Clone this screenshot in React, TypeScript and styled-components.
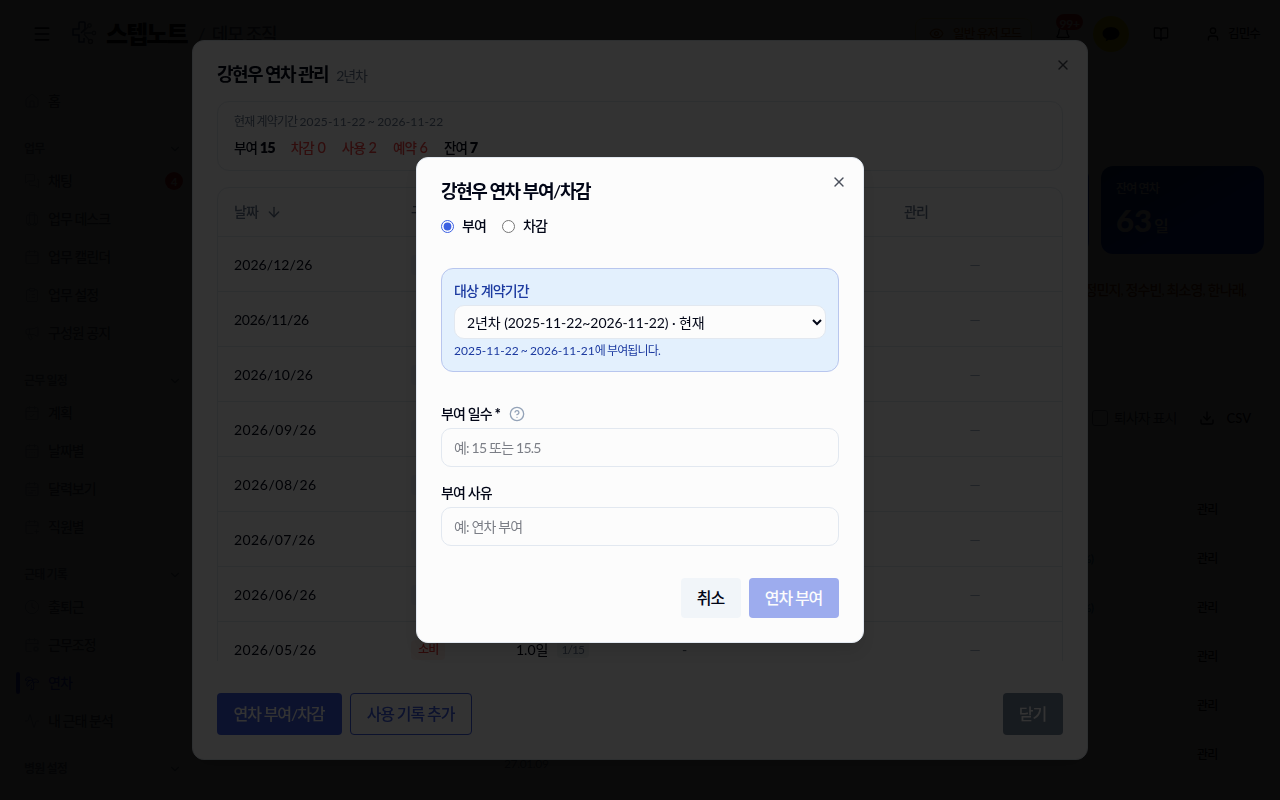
import React from "react";
import styled, { createGlobalStyle, css } from "styled-components";
import {
  Activity, ArrowDown, BookOpen, Calendar, CalendarCheck, CalendarCog, CalendarDays,
  CalendarPlus, CalendarRange, ChevronDown, CircleHelp, ClipboardList, Clock, Download, Eye, House,
  Luggage, Megaphone, Menu, MessagesSquare, TreePalm, User, X, Bell,
} from "lucide-react";
import type { LucideIcon } from "lucide-react";

const Global = createGlobalStyle`
  *, *::before, *::after { box-sizing: border-box; }
  html, body { margin: 0; padding: 0; background: #fcfcfc; }
  body, button, input, select {
    font-family: Lato, "Noto Sans CJK KR", sans-serif;
    letter-spacing: -0.062em;
  }
  body { width: 1280px; height: 800px; overflow: hidden; color: #020617; font-size: 14px; line-height: 20px; }
  button { border: 0; background: none; padding: 0; color: inherit; }
`;

const Num = styled.span<{ $ls?: number }>`
  letter-spacing: ${(p) => p.$ls ?? 0}em;
`;

/* Digits keep their natural tracking while Hangul is set tighter. */
const Txt = ({ children, ls }: { children: string; ls?: number }) => (
  <>
    {children.split(/([0-9./()~+-]+)/).map((s, i) => (i % 2 ? <Num key={i} $ls={ls}>{s}</Num> : s))}
  </>
);

/* ---------- page ---------- */
const Page = styled.div`
  height: 800px;
  display: grid;
  grid-template: 67px 1fr / 192px 1fr;
  overflow: hidden;
`;
const Header = styled.header`
  grid-column: 1 / -1;
  display: flex;
  align-items: center;
  padding: 0 20px 0 32px;
`;
const Brand = styled.div`
  display: flex;
  align-items: center;
  margin-left: 20px;
  font-size: 24px;
  font-weight: 900;
  letter-spacing: -0.08em;
  svg { margin-right: 9px; }
`;
const Slash = styled.span`
  margin: 0 7px 0 10px;
  font-size: 20px;
  color: #64748b;
`;
const Org = styled.span`
  font-size: 18px;
  font-weight: 500;
  letter-spacing: -0.07em;
  color: #475569;
`;
const Tools = styled.div`
  margin-left: auto;
  display: flex;
  align-items: center;
`;
const ModePill = styled.div`
  display: flex;
  align-items: center;
  gap: 9px;
  width: 117px;
  height: 32px;
  padding-left: 13px;
  border: 1px solid #fde68a;
  border-radius: 8px;
  background: #fffbeb;
  color: #b45309;
  font-size: 12.500px;
  font-weight: 500;
`;
const BellBox = styled.div`
  position: relative;
  display: flex;
  margin-left: 23px;
`;
const Count = styled.span<{ $float?: boolean }>`
  display: grid;
  place-items: center;
  height: ${(p) => (p.$float ? 16 : 18)}px;
  width: ${(p) => (p.$float ? 27 : 18)}px;
  border-radius: 9px;
  background: #dc2626;
  color: #fcfcfc;
  font-size: ${(p) => (p.$float ? 12 : 11)}px;
  font-weight: 700;
  letter-spacing: -0.02em;
  ${(p) => (p.$float ? css`position: absolute; left: 1px; top: -12px;` : css`margin-left: auto;`)}
`;
const Kakao = styled.div`
  display: grid;
  place-items: center;
  width: 36px;
  height: 36px;
  margin: 0 24px 0 22px;
  border-radius: 50%;
  background: #fee500;
`;
const UserBox = styled.div`
  display: flex;
  align-items: center;
  gap: 7px;
  margin-left: 36px;
  font-size: 12.500px;
  font-weight: 500;
`;

const Sidebar = styled.nav`
  padding: 15px 9px 0 16px;
  overflow: hidden;
`;
const NavHead = styled.div`
  display: flex;
  align-items: center;
  justify-content: space-between;
  height: 27px;
  margin-top: 15px;
  padding: 0 1px 0 8px;
  font-size: 12px;
  font-weight: 600;
  color: #64748b;
`;
const NavItem = styled.div<{ $active?: boolean }>`
  display: flex;
  align-items: center;
  gap: 8px;
  height: 38px;
  padding: 0 0 1px ${(p) => (p.$active ? 4 : 8)}px;
  font-weight: 500;
  letter-spacing: -0.068em;
  color: ${(p) => (p.$active ? "#2a3ff0" : "#475569")};
  > svg { color: ${(p) => (p.$active ? "#2a3ff0" : "#94a3b8")}; }
`;
const ActiveBar = styled.i`
  width: 4px;
  height: 22px;
  margin: 0 -4px 0 -4px;
  border-radius: 2px;
  background: #2a3ff0;
`;

const Main = styled.main`
  display: flex;
  flex-direction: column;
  padding: 99px 16px 0;
  overflow: hidden;
`;
const Stats = styled.div`
  display: flex;
  justify-content: flex-end;
  gap: 12px;
`;
const Stat = styled.div`
  flex: none;
  width: 163px;
  height: 88px;
  padding: 14px 15px;
  border-radius: 12px;
  background: linear-gradient(150deg, #0b3f9a 0%, #0a38b8 35%, #0a36f0 60%, #0a3cff 100%);
  color: #fcfcfc;
`;
const StatName = styled.div`
  font-size: 12px;
  line-height: 18px;
  font-weight: 500;
`;
const StatValue = styled.div`
  margin-top: 2px;
  font-size: 31px;
  line-height: 40px;
  font-weight: 900;
  small { margin-left: 2px; font-size: 16px; font-weight: 500; }
`;
const Notice = styled.div`
  height: 57px;
  margin: 16px 1px 0;
  padding: 10px 17px;
  border-radius: 8px;
  background: #fffbeb;
  color: #92400e;
  text-align: right;
  font-weight: 500;
`;
const Actions = styled.div`
  display: flex;
  align-items: center;
  justify-content: flex-end;
  height: 32px;
  margin: 75px 13px 0 0;
  color: #334155;
`;
const Check = styled.i`
  width: 16px;
  height: 16px;
  margin-right: 6px;
  border: 1px solid #64748b;
  border-radius: 3px;
`;
const Csv = styled.span`
  display: flex;
  align-items: center;
  gap: 12px;
  margin-left: 22px;
  font-size: 13px;
  font-weight: 500;
  letter-spacing: 0;
  color: #020617;
`;
const Roster = styled.div`
  margin: 15px 1px 0;
  padding-top: 35px;
  border: solid #eef2f6;
  border-width: 1px 0;
`;
const RosterRow = styled.div`
  display: grid;
  grid-template-columns: 78px 88px 100px 340px 1fr 32px;
  align-items: center;
  height: 49px;
  padding: 0 34px 0 29px;
  font-size: 12px;
  font-weight: 500;
`;
const Rate = styled.span`
  justify-self: start;
  width: 249px;
  text-align: right;
  color: #0369a1;
`;
const Expiry = styled.span`
  padding-top: 18px;
  color: #64748b;
  font-weight: 400;
`;

/* ---------- dialogs ---------- */
const Overlay = styled.div`
  position: fixed;
  inset: 0;
  display: grid;
  place-items: center;
  background: rgba(0, 0, 0, 0.8);
`;
const Panel = styled.section<{ $w: number; $h?: number }>`
  position: relative;
  display: flex;
  flex-direction: column;
  width: ${(p) => p.$w}px;
  ${(p) => p.$h && `height: ${p.$h}px;`}
  padding: 24px;
  border: 1px solid #e2e8f0;
  border-radius: 12px;
  background: #fcfcfc;
  box-shadow: 0 10px 15px -3px rgba(0, 0, 0, 0.1);
`;
const Close = styled.button`
  position: absolute;
  top: 16px;
  right: 16px;
  display: flex;
  color: #4b505c;
`;
const Title = styled.h2<{ $ls: number }>`
  height: 18px;
  margin: 0;
  font-size: 18px;
  line-height: 18px;
  font-weight: 600;
  letter-spacing: ${(p) => p.$ls}em;
  small { margin-left: 8px; font-size: 14px; font-weight: 400; letter-spacing: -0.075em; color: #64748b; }
`;
const Scroll = styled.div`
  flex: 1;
  min-height: 0;
  margin: 18px 0 32px;
  overflow: hidden;
`;
const Summary = styled.div`
  height: 70px;
  padding: 11px 16px;
  border: 1px solid #e2e8f0;
  border-radius: 12px;
`;
const Term = styled.div`
  font-size: 12px;
  line-height: 18px;
  color: #64748b;
`;
const Totals = styled.div`
  display: flex;
  gap: 16px;
  margin-top: 7px;
  font-weight: 500;
`;
const Total = styled.span<{ $minus?: boolean }>`
  font-size: 13.500px;
  color: ${(p) => (p.$minus ? "#ef4444" : "inherit")};
  b {
    margin-left: ${(p) => (p.$minus ? 1 : 0)}px;
    font-size: 14.500px;
    font-weight: ${(p) => (p.$minus ? 500 : 800)};
    letter-spacing: ${(p) => (p.$minus ? 0 : -0.06)}em;
  }
`;
const Table = styled.div`
  margin-top: 16px;
  border: 1px solid #e2e8f0;
  border-radius: 12px;
`;
const Row = styled.div<{ $head?: boolean }>`
  display: grid;
  grid-template-columns: 177px 105px 166px 222px 174px;
  align-items: center;
  height: ${(p) => (p.$head ? 49 : 55)}px;
  padding-top: ${(p) => (p.$head ? 0 : 2)}px;
  border-bottom: 1px solid #e2e8f0;
  color: ${(p) => (p.$head ? "#64748b" : "inherit")};
  font-weight: ${(p) => (p.$head ? 500 : 400)};
  > * { padding-left: 16px; display: flex; align-items: center; }
  svg { margin-left: 8px; }
`;
const Dash = styled.span`
  justify-content: center;
  color: #94a3b8;
  && { padding: 0 1px 0 0; }
`;
const Muted = styled.span`
  color: #475569;
`;
const Tag = styled.span<{ $tone: "red" | "blue" | "gray" }>`
  display: grid;
  place-items: center;
  height: 20px;
  padding: 0 7px;
  border-radius: 4px;
  font-size: 12px;
  font-weight: 500;
  ${(p) => ({
    red: "background:#fdeeec;color:#e53935;",
    blue: "background:#f0f2fe;color:#3e5ce0;",
    gray: "height:18px;margin:0 0 2px 9px;padding:0 5px;background:#eff3f6;color:#64748b;font-weight:400;",
  })[p.$tone]}
`;
const Bar = styled.footer`
  display: flex;
  gap: 8px;
`;
const Button = styled.button<{ $kind: "primary" | "outline" | "muted" | "soft"; $w: number; $tall?: boolean; $off?: boolean; $end?: boolean }>`
  width: ${(p) => p.$w}px;
  height: ${(p) => (p.$tall ? 42 : 40)}px;
  padding: 0 1px 2px 0;
  border-radius: 4px;
  font-size: 16px;
  font-weight: 500;
  letter-spacing: -0.068em;
  white-space: nowrap;
  ${(p) => p.$end && "margin-left: auto;"}
  ${(p) => p.$off && "opacity: 0.5;"}
  ${(p) => ({
    primary: "background:#3e5ce0;color:#fcfcfc;",
    outline: "border:1px solid #3e5ce0;color:#3e5ce0;",
    muted: "background:#75879a;color:#fcfcfc;",
    soft: "background:#f1f5f9;color:#020617;",
  })[p.$kind]}
`;

const Radios = styled.div`
  display: flex;
  gap: 16px;
  margin-top: 16px;
`;
const RadioLabel = styled.label`
  display: flex;
  align-items: center;
  gap: 8px;
  font-weight: 500;
  input { width: 13px; height: 13px; margin: 0; accent-color: #3b5fe2; }
`;
const Target = styled.div`
  display: flex;
  flex-direction: column;
  gap: 4px;
  margin-top: 32px;
  padding: 12px;
  border: 1px solid #b8c6ee;
  border-radius: 12px;
  background: #e3f0fd;
  color: #1c3aa0;
`;
const Hint = styled.div`
  font-size: 12px;
  line-height: 16px;
`;
const Select = styled.select`
  height: 34px;
  padding: 0 8px;
  border: 1px solid #e2e8f0;
  border-radius: 10px;
  background: #fcfcfc;
  color: #020617;
  font-size: 14px;
  letter-spacing: -0.006em;
`;
const Field = styled.label<{ $top: number }>`
  display: flex;
  flex-direction: column;
  gap: 4px;
  margin-top: ${(p) => p.$top}px;
`;
const Label = styled.span`
  display: flex;
  align-items: center;
  height: 20px;
  font-weight: 500;
  b { margin-left: 3px; font-weight: 800; }
  svg { margin-left: 9px; color: #94a3b8; }
`;
const Input = styled.input<{ $ls: number }>`
  height: 39px;
  padding: 0 12px 1px;
  border: 1px solid #e2e8f0;
  border-radius: 10px;
  background: #fcfcfc;
  font-size: 14px;
  letter-spacing: ${(p) => p.$ls}em;
  &::placeholder { color: #7b7e86; }
`;
const Ends = styled(Bar)`
  justify-content: flex-end;
  margin-top: 32px;
`;

const nav: { head: string; items: [string, LucideIcon][] }[] = [
  { head: "업무", items: [["채팅", MessagesSquare], ["업무 데스크", Luggage], ["업무 캘린더", Calendar], ["업무 설정", ClipboardList], ["구성원 공지", Megaphone]] },
  { head: "근무 일정", items: [["계획", CalendarCheck], ["날짜별", CalendarDays], ["달력보기", CalendarRange], ["직원별", CalendarPlus]] },
  { head: "근태 기록", items: [["출퇴근", Clock], ["근무조정", CalendarCog], ["연차", TreePalm], ["내 근태 분석", Activity]] },
  { head: "병원 설정", items: [] },
];

/* month and the tracking of its date */
const dates: [string, number][] = [
  ["12", 0.005], ["11", -0.02], ["10", 0.01], ["09", 0.036], ["08", 0.036], ["07", 0.028], ["06", 0.036], ["05", 0.036],
];

const Logo = () => (
  <svg width="25" height="25" viewBox="0 0 25 25" fill="none" strokeWidth="1.5">
    <path d="M12 17v4H7v-7H1V8h6V2q0-1 1-1h4q1 0 1 1v6l-4 4" stroke="#1e3a6e" />
    <path d="M11 11l5-5M12 12h8M12 13l5 6" stroke="#64748b" />
    <circle cx="17.500" cy="4.500" r="1.700" stroke="#64748b" />
    <circle cx="22" cy="12" r="1.700" stroke="#64748b" />
    <circle cx="18.500" cy="20.500" r="2" stroke="#475569" />
  </svg>
);

const Background = () => (
  <Page>
    <Header>
      <Menu size={20} />
      <Brand><Logo />스텝노트</Brand>
      <Slash>/</Slash>
      <Org>데모 조직</Org>
      <Tools>
        <ModePill><Eye size={15} />일반 유저 모드</ModePill>
        <BellBox><Bell size={16} /><Count $float>99+</Count></BellBox>
        <Kakao>
          <svg width="18" height="16" viewBox="0 0 18 16"><path d="M9 1C4.300 1 .5 3.900.5 7.500c0 2.300 1.600 4.300 3.900 5.400L3.600 15.500l3.300-1.800q1 .2 2.100.2c4.700 0 8.500-2.800 8.500-6.400S13.700 1 9 1z" fill="#111" /></svg>
        </Kakao>
        <BookOpen size={16} />
        <UserBox><User size={16} />김민수</UserBox>
      </Tools>
    </Header>
    <Sidebar>
      <NavItem><House size={16} strokeWidth={1.5} />홈</NavItem>
      {nav.map((g) => (
        <React.Fragment key={g.head}>
          <NavHead>{g.head}<ChevronDown size={14} /></NavHead>
          {g.items.map(([name, Icon]) => (
            <NavItem key={name} $active={name === "연차"}>
              {name === "연차" && <ActiveBar />}
              <Icon size={16} strokeWidth={1.5} />
              {name}
              {name === "채팅" && <Count>4</Count>}
            </NavItem>
          ))}
        </React.Fragment>
      ))}
    </Sidebar>
    <Main>
      <Stats>
        <Stat />
        <Stat>
          <StatName>잔여 연차</StatName>
          <StatValue><Num>63</Num><small>일</small></StatValue>
        </Stat>
      </Stats>
      <Notice>정민지, 정수빈, 최소영, 한나래,</Notice>
      <Actions><Check />퇴사자 표시<Csv><Download size={16} />CSV</Csv></Actions>
      <Roster>
        {["", "(0%)", "(0%)", "", "", ""].map((rate, i) => (
          <RosterRow key={i}>
            <span>{i === 5 && "김민수"}</span>
            <span>{i === 5 && "간호사"}</span>
            <span>{i === 5 && "3년차"}</span>
            <Expiry>{i === 5 && <Num $ls={-0.03}>27.01.09</Num>}</Expiry>
            <Rate>{rate}</Rate>
            <span>관리</span>
          </RosterRow>
        ))}
      </Roster>
    </Main>
  </Page>
);

const ManageDialog = () => (
  <Overlay>
    <Panel $w={896} $h={720}>
      <Close><X size={16} /></Close>
      <Title $ls={-0.085}>강현우 연차 관리<small>2년차</small></Title>
      <Scroll>
        <Summary>
          <Term><Txt ls={0.013}>현재 계약기간 2025-11-22 ~ 2026-11-22</Txt></Term>
          <Totals>
            <Total>부여 <b>15</b></Total>
            <Total $minus>차감 <b>0</b></Total>
            <Total $minus>사용 <b>2</b></Total>
            <Total $minus>예약 <b>6</b></Total>
            <Total>잔여 <b>7</b></Total>
          </Totals>
        </Summary>
        <Table>
          <Row $head>
            <span>날짜<ArrowDown size={16} /></span>
            <span>구분</span><span>일수</span><span>사유</span><span>관리</span>
          </Row>
          {dates.map(([m, ls]) => (
            <Row key={m}>
              <Num $ls={ls}>2026/{m}/26</Num>
              <span><Tag $tone={m === "05" ? "red" : "blue"}>{m === "05" ? "소비" : "예약"}</Tag></span>
              <span><Txt>1.0일</Txt><Tag $tone="gray"><Num $ls={-0.08}>1/15</Num></Tag></span>
              <Muted>-</Muted>
              <Dash>—</Dash>
            </Row>
          ))}
        </Table>
      </Scroll>
      <Bar>
        <Button $kind="primary" $w={125} $tall>연차 부여/차감</Button>
        <Button $kind="outline" $w={122} $tall>사용 기록 추가</Button>
        <Button $kind="muted" $w={60} $tall $end>닫기</Button>
      </Bar>
    </Panel>
  </Overlay>
);

const GrantDialog = () => (
  <Overlay>
    <Panel $w={448}>
      <Close><X size={16} /></Close>
      <Title $ls={-0.079}>강현우 연차 부여/차감</Title>
      <Radios>
        <RadioLabel><input type="radio" name="kind" defaultChecked />부여</RadioLabel>
        <RadioLabel><input type="radio" name="kind" />차감</RadioLabel>
      </Radios>
      <Target>
        <Label>대상 계약기간</Label>
        <Select><option>2년차 (2025-11-22~2026-11-22) · 현재</option></Select>
        <Hint><Txt>2025-11-22 ~ 2026-11-21에 부여됩니다.</Txt></Hint>
      </Target>
      <Field $top={32}>
        <Label>부여 일수 <b>*</b><CircleHelp size={16} /></Label>
        <Input $ls={-0.056} placeholder="예: 15 또는 15.5" />
      </Field>
      <Field $top={16}>
        <Label>부여 사유</Label>
        <Input $ls={-0.06} placeholder="예: 연차 부여" />
      </Field>
      <Ends>
        <Button $kind="soft" $w={60}>취소</Button>
        <Button $kind="primary" $w={90} $off>연차 부여</Button>
      </Ends>
    </Panel>
  </Overlay>
);

export default function App() {
  return (
    <>
      <Global />
      <Background />
      <ManageDialog />
      <GrantDialog />
    </>
  );
}
